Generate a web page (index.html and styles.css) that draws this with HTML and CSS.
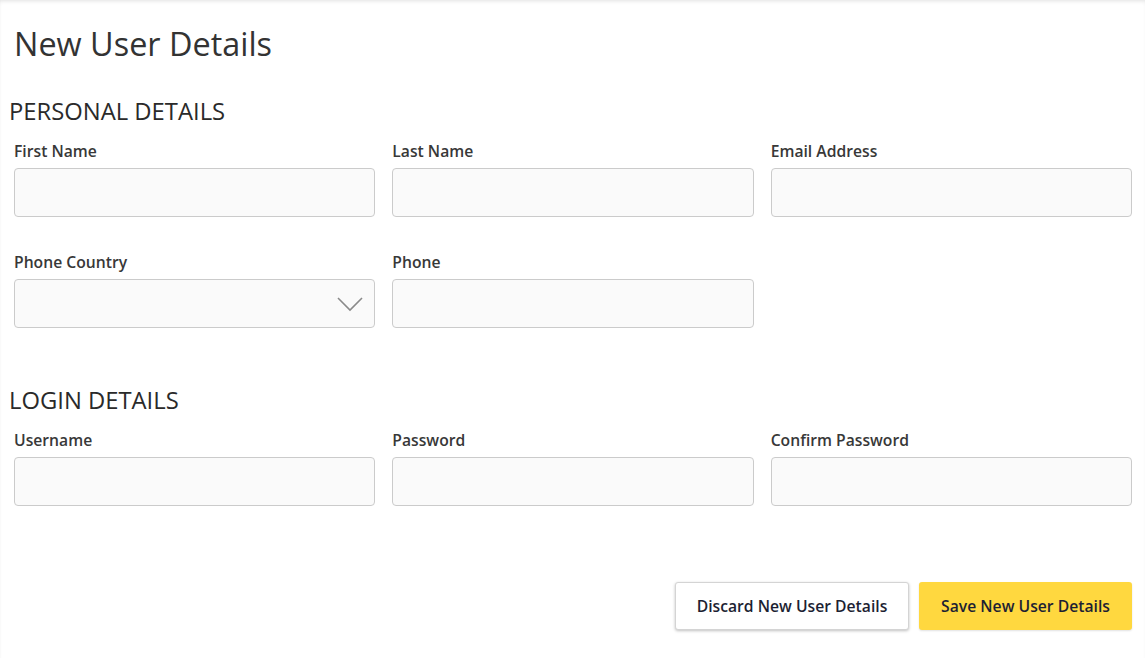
FILE: index.html
```html
<!DOCTYPE html>
<html lang="en">

<head>
    <meta charset="UTF-8">
    <meta name="viewport" content="width=device-width, initial-scale=1.0">
    <title>New User Details</title>
    <link rel="stylesheet" href="styles.css">
</head>

<body>
    <div class="page">
        <h1 class="title">New User Details</h1>

        <h2 class="section">PERSONAL DETAILS</h2>
        <div class="fields">
            <div class="field">
                <label for="first-name">First Name</label>
                <input type="text" id="first-name">
            </div>
            <div class="field">
                <label for="last-name">Last Name</label>
                <input type="text" id="last-name">
            </div>
            <div class="field">
                <label for="email">Email Address</label>
                <input type="text" id="email">
            </div>
            <div class="field">
                <label for="phone-country">Phone Country</label>
                <div class="select">
                    <select id="phone-country"></select>
                    <svg class="chevron" width="26" height="15" viewBox="0 0 26 15">
                        <path d="M1 1 L13 13 L25 1" fill="none" stroke="#8a8a8a" stroke-width="1.6" />
                    </svg>
                </div>
            </div>
            <div class="field">
                <label for="phone">Phone</label>
                <input type="text" id="phone">
            </div>
        </div>

        <h2 class="section section-login">LOGIN DETAILS</h2>
        <div class="fields">
            <div class="field">
                <label for="username">Username</label>
                <input type="text" id="username">
            </div>
            <div class="field">
                <label for="password">Password</label>
                <input type="password" id="password">
            </div>
            <div class="field">
                <label for="confirm-password">Confirm Password</label>
                <input type="password" id="confirm-password">
            </div>
        </div>

        <div class="actions">
            <button class="btn btn-discard">Discard New User Details</button>
            <button class="btn btn-save">Save New User Details</button>
        </div>
    </div>
</body>

</html>
```

FILE: styles.css
```css
body {
    margin: 0;
    background: #fff;
    font-family: "Open Sans", "Noto Sans", sans-serif;
    color: #333;
}

.page {
    min-height: 658px;
    box-sizing: border-box;
    padding: 24px 13px 20px 14px;
    box-shadow: inset 0 3px 4px -2px rgba(0, 0, 0, 0.12), inset 1px 0 1px -1px rgba(0, 0, 0, 0.1);
}

.title {
    margin: 0;
    font-size: 32.4px;
    line-height: 38px;
    font-weight: 400;
    color: #333;
}

.section {
    margin: 34px 0 0 -5px;
    font-size: 23.8px;
    line-height: 30px;
    font-weight: 400;
    color: #2a2a2a;
}

.section-login {
    margin-top: 22px;
}

.fields {
    display: grid;
    grid-template-columns: repeat(3, 1fr);
    column-gap: 17px;
    margin-top: 15px;
}

.field {
    margin-bottom: 35px;
}

.field label {
    display: block;
    font-size: 15.7px;
    line-height: 20px;
    font-weight: 600;
    color: #383838;
    margin-bottom: 7px;
}

.field input,
.field select {
    display: block;
    width: 100%;
    height: 49px;
    box-sizing: border-box;
    border: 1px solid #cbcbcb;
    border-radius: 4px;
    background: #fafafa;
    font-family: inherit;
    font-size: 15px;
    padding: 0 12px;
    margin: 0;
    appearance: none;
    -webkit-appearance: none;
}

.select {
    position: relative;
}

.select .chevron {
    position: absolute;
    right: 12px;
    top: 18px;
    pointer-events: none;
}

.actions {
    display: flex;
    justify-content: flex-end;
    gap: 10px;
    margin-top: 41px;
}

.btn {
    height: 48px;
    box-sizing: border-box;
    padding: 0 10px;
    border-radius: 3px;
    font-family: inherit;
    font-size: 15.7px;
    font-weight: 600;
    white-space: nowrap;
    color: #1d1f33;
    cursor: pointer;
}

.btn-discard {
    width: 234px;
    background: #fff;
    border: 1px solid #d4d4d4;
    box-shadow: 0 1px 3px rgba(0, 0, 0, 0.25);
}

.btn-save {
    width: 213px;
    background: #ffd83f;
    border: none;
    box-shadow: 0 1px 2px rgba(0, 0, 0, 0.12);
}
```
